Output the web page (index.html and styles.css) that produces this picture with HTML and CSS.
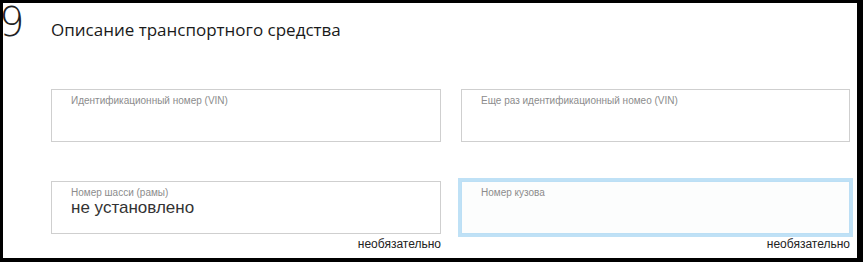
FILE: index.html
```html
<!DOCTYPE html>
<html lang="ru">
<head>
    <meta charset="UTF-8">
    <title>Описание транспортного средства</title>
    <link rel="stylesheet" href="styles.css">
</head>
<body>
    <div class="frame">
        <span class="step">9</span>
        <h2 class="title">Описание транспортного средства</h2>
        <div class="fields">
            <div class="field">
                <div class="box">
                    <div class="label">Идентификационный номер (VIN)</div>
                    <div class="value"></div>
                </div>
                <div class="hint"></div>
            </div>
            <div class="field">
                <div class="box">
                    <div class="label">Еще раз идентификационный номео (VIN)</div>
                    <div class="value"></div>
                </div>
                <div class="hint"></div>
            </div>
            <div class="field">
                <div class="box">
                    <div class="label">Номер шасси (рамы)</div>
                    <div class="value">не установлено</div>
                </div>
                <div class="hint">необязательно</div>
            </div>
            <div class="field">
                <div class="box focused">
                    <div class="label">Номер кузова</div>
                    <div class="value"></div>
                </div>
                <div class="hint">необязательно</div>
            </div>
        </div>
    </div>
</body>
</html>
```

FILE: styles.css
```css
body {
    margin: 0;
    background-color: #ffffff;
    font-family: "Liberation Sans", Arial, sans-serif;
}

.frame {
    position: relative;
    overflow: hidden;
    box-sizing: border-box;
    width: 863px;
    height: 262px;
    border: 3px solid #000000;
    border-right-width: 6px;
    border-bottom-width: 4px;
    padding: 16px 0 0 48px;
}

.step {
    position: absolute;
    left: -4px;
    top: -3px;
    font-family: "DejaVu Sans", sans-serif;
    font-weight: 200;
    font-size: 40px;
    line-height: 44px;
    color: #222222;
}

.title {
    margin: 0;
    font-family: "Open Sans", sans-serif;
    font-weight: 400;
    font-size: 17px;
    line-height: 22px;
    color: #1a1a1a;
}

.fields {
    display: grid;
    grid-template-columns: 390px 389px;
    column-gap: 20px;
    row-gap: 21px;
    margin-top: 48px;
}

.box {
    box-sizing: border-box;
    height: 53px;
    border: 1px solid #cfcfcf;
    padding: 4px 0 0 19px;
}

.box.focused {
    border-color: #bcdff5;
    box-shadow: 0 0 0 3px #bfe1f6;
    background-color: #fcfdfd;
}

.label {
    font-size: 10px;
    line-height: 13px;
    color: #8c8c8c;
}

.value {
    font-size: 17px;
    line-height: 18px;
    color: #333333;
}

.hint {
    height: 16px;
    margin-top: 2px;
    text-align: right;
    font-size: 12px;
    line-height: 16px;
    color: #222222;
}
```
